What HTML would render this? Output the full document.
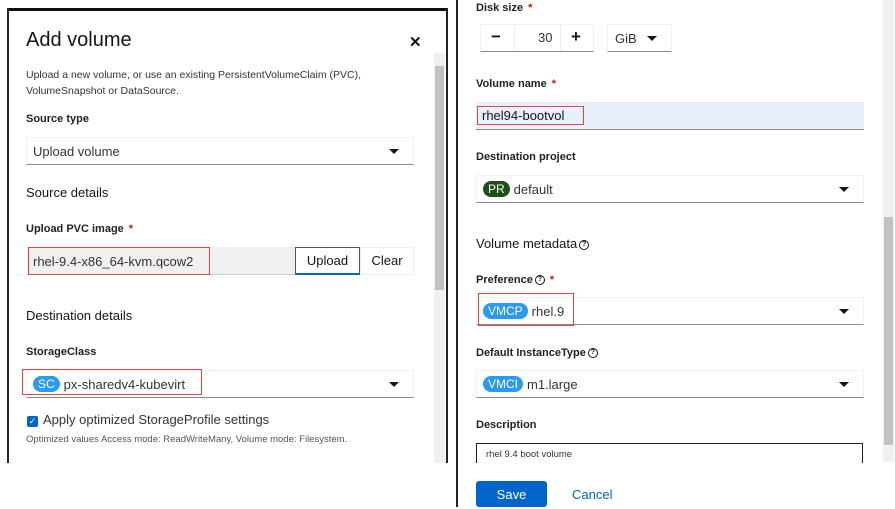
<!DOCTYPE html>
<html><head><style>
*{box-sizing:border-box;margin:0;padding:0}
body{width:895px;height:507px;background:#fff;position:relative;overflow:hidden;font-family:"Liberation Sans",sans-serif;color:#151515}
.a{position:absolute}
.lbl{position:absolute;font-size:11px;font-weight:bold;color:#222}
.req{color:#c9190b;margin-left:5px}
.sel{position:absolute;background:#fff;border:1px solid #f0f0f0;border-bottom:1px solid #8a8d90;font-size:13px;padding-left:6px;display:flex;align-items:center;color:#333}
.caret{position:absolute;right:14px;top:50%;margin-top:-2px;width:0;height:0;border-left:5px solid transparent;border-right:5px solid transparent;border-top:5px solid #151515}
.red{position:absolute;border:1.5px solid #e0463f}
.badge{display:inline-block;border-radius:10px;color:#fff;font-size:12px;padding:1px 5px;margin-right:4px;line-height:14px}
.q{display:inline-block;width:10px;height:10px;border:1.3px solid #151515;border-radius:50%;font-size:7px;text-align:center;line-height:8px;font-weight:bold;vertical-align:middle;margin-left:2px}
</style></head><body>
<div class="a" style="left:7px;top:8px;width:441px;height:3px;background:#111"></div>
<div class="a" style="left:7px;top:8px;width:2px;height:455px;background:#222"></div>
<div class="a" style="left:446px;top:8px;width:2px;height:455px;background:#222"></div>
<div class="a" style="left:434px;top:53px;width:11px;height:410px;background:#f0f0f0"></div>
<div class="a" style="left:435px;top:66px;width:9px;height:224px;background:#c1c1c1"></div>
<div class="a" style="left:26px;top:29px;font-size:20px">Add volume</div>
<div class="a" style="left:409px;top:33px;font-size:15px;font-weight:bold">✕</div>
<div class="a" style="left:26px;top:67px;font-size:10.5px;line-height:16px;color:#333">Upload a new volume, or use an existing PersistentVolumeClaim (PVC),<br>VolumeSnapshot or DataSource.</div>
<div class="lbl" style="left:26px;top:113px">Source type</div>
<div class="sel" style="left:26px;top:137px;width:388px;height:28px">Upload volume<span class="caret"></span></div>
<div class="a" style="left:26px;top:185px;font-size:13px">Source details</div>
<div class="lbl" style="left:26px;top:223px">Upload PVC image<span class="req">*</span></div>
<div class="a" style="left:27px;top:247px;width:268px;height:28px;background:#f0f0f0;border-bottom:1px solid #ccc"></div>
<div class="a" style="left:33px;top:254px;font-size:13px;color:#333">rhel-9.4-x86_64-kvm.qcow2</div>
<div class="red" style="left:28px;top:247px;width:182px;height:28px"></div>
<div class="a" style="left:295px;top:247px;width:65px;height:28px;border:1px solid #555;border-bottom:2px solid #06c;font-size:13px;text-align:center;line-height:26px">Upload</div>
<div class="a" style="left:360px;top:247px;width:54px;height:28px;border:1px solid #eee;font-size:13px;text-align:center;line-height:26px">Clear</div>
<div class="a" style="left:26px;top:308px;font-size:13px">Destination details</div>
<div class="lbl" style="left:26px;top:346px">StorageClass</div>
<div class="sel" style="left:26px;top:370px;width:388px;height:28px"><span class="badge" style="background:#2b9af3">SC</span>px-sharedv4-kubevirt<span class="caret"></span></div>
<div class="red" style="left:22px;top:369px;width:180px;height:26px"></div>
<div class="a" style="left:27px;top:416px;width:11px;height:11px;background:#06c;border-radius:2px;color:#fff;font-size:9px;line-height:11px;text-align:center">✓</div>
<div class="a" style="left:43px;top:412px;font-size:13px;color:#333">Apply optimized StorageProfile settings</div>
<div class="a" style="left:26px;top:434px;font-size:9.5px;color:#555">Optimized values Access mode: ReadWriteMany, Volume mode: Filesystem.</div>

<div class="a" style="left:456px;top:0;width:2px;height:507px;background:#222"></div>
<div class="a" style="left:883px;top:0;width:11px;height:462px;background:#f0f0f0"></div>
<div class="a" style="left:884px;top:217px;width:9px;height:228px;background:#c1c1c1"></div>
<div class="lbl" style="left:476px;top:2px">Disk size<span class="req">*</span></div>
<div class="a" style="left:480px;top:24px;width:114px;height:28px;border:1px solid #f0f0f0;border-bottom:1px solid #8a8d90"></div>
<div class="a" style="left:514px;top:24px;width:1px;height:27px;background:#eee"></div>
<div class="a" style="left:560px;top:24px;width:1px;height:27px;background:#eee"></div>
<div class="a" style="left:491px;top:27px;font-size:17px;font-weight:bold">−</div>
<div class="a" style="left:538px;top:30px;font-size:13px;color:#333">30</div>
<div class="a" style="left:571px;top:27px;font-size:17px;font-weight:bold">+</div>
<div class="sel" style="left:607px;top:24px;width:65px;height:28px;padding-left:7px">GiB<span class="caret" style="right:14px"></span></div>
<div class="lbl" style="left:476px;top:78px">Volume name<span class="req">*</span></div>
<div class="a" style="left:476px;top:102px;width:388px;height:28px;background:#e8f0fe;border-bottom:1px solid #8a8d90"></div>
<div class="a" style="left:482px;top:108px;font-size:13px">rhel94-bootvol</div>
<div class="red" style="left:477px;top:106px;width:107px;height:19px"></div>
<div class="lbl" style="left:476px;top:151px">Destination project</div>
<div class="sel" style="left:476px;top:175px;width:388px;height:28px"><span class="badge" style="background:#1e4f18">PR</span>default<span class="caret"></span></div>
<div class="a" style="left:476px;top:236px;font-size:13px">Volume metadata<span class="q">?</span></div>
<div class="lbl" style="left:476px;top:274px">Preference<span class="q">?</span><span class="req">*</span></div>
<div class="sel" style="left:476px;top:297px;width:388px;height:28px"><span class="badge" style="background:#2b9af3">VMCP</span>rhel.9<span class="caret"></span></div>
<div class="red" style="left:478px;top:293px;width:96px;height:33px"></div>
<div class="lbl" style="left:476px;top:347px">Default InstanceType<span class="q">?</span></div>
<div class="sel" style="left:476px;top:370px;width:388px;height:28px"><span class="badge" style="background:#2b9af3">VMCI</span>m1.large<span class="caret"></span></div>
<div class="lbl" style="left:476px;top:419px">Description</div>
<div class="a" style="left:476px;top:443px;width:387px;height:20px;border:1.5px solid #222;border-bottom:none"></div>
<div class="a" style="left:486px;top:449px;font-size:9.5px;color:#333">rhel 9.4 boot volume</div>
<div class="a" style="left:476px;top:481px;width:71px;height:26px;background:#0066cc;border-radius:3px;color:#fff;font-size:13px;text-align:center;line-height:28px">Save</div>
<div class="a" style="left:572px;top:487px;font-size:13px;color:#06c">Cancel</div>
</body></html>
